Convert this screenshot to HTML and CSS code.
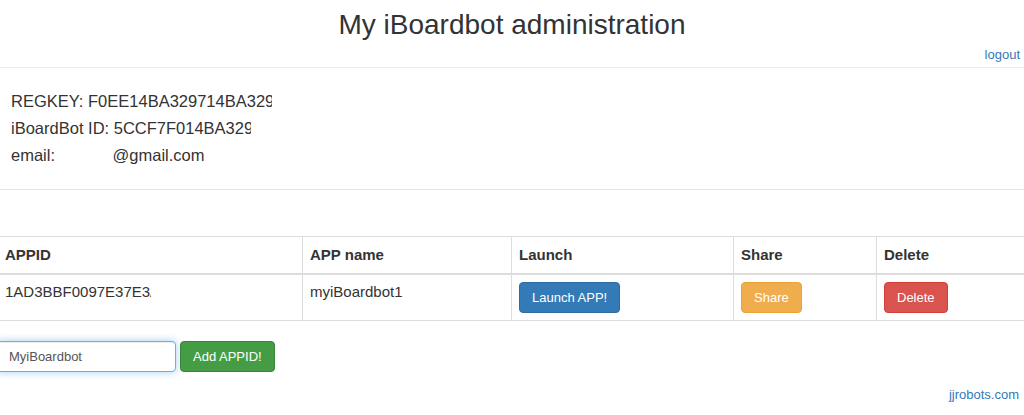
FILE: index.html
```html
<!DOCTYPE html>
<html lang="en">
<head>
    <meta charset="UTF-8">
    <title>My iBoardbot administration</title>
    <link rel="stylesheet" href="styles.css">
</head>
<body>
    <header class="top">
        <h1>My iBoardbot administration</h1>
        <div class="logout"><a href="#">logout</a></div>
    </header>

    <div class="info">
        <div class="info-line">REGKEY: <span class="clip clip-key">F0EE14BA329714BA329C4D</span></div>
        <div class="info-line">iBoardBot ID: <span class="clip clip-id">5CCF7F014BA329A1</span></div>
        <div class="info-line">email: <span class="blank"></span>@gmail.com</div>
    </div>

    <div class="main">
        <table class="apps">
            <thead>
                <tr>
                    <th class="col-id">APPID</th>
                    <th class="col-name">APP name</th>
                    <th class="col-launch">Launch</th>
                    <th class="col-share">Share</th>
                    <th>Delete</th>
                </tr>
            </thead>
            <tbody>
                <tr>
                    <td><span class="clip clip-app">1AD3BBF0097E37E3A</span></td>
                    <td>myiBoardbot1</td>
                    <td><button class="btn btn-blue">Launch APP!</button></td>
                    <td><button class="btn btn-orange">Share</button></td>
                    <td><button class="btn btn-red">Delete</button></td>
                </tr>
            </tbody>
        </table>

        <form class="add-form">
            <input type="text" class="app-input" value="MyiBoardbot">
            <button type="button" class="btn btn-green">Add APPID!</button>
        </form>
    </div>

    <div class="footer"><a href="#">jjrobots.com</a></div>
</body>
</html>
```

FILE: styles.css
```css
* {
    margin: 0;
    padding: 0;
    box-sizing: border-box;
    font-family: 'Liberation Sans', Arial, sans-serif;
}

body {
    background: #fff;
    color: #333;
    overflow: hidden;
}

a {
    color: #337ab7;
    text-decoration: none;
}

.top {
    padding-top: 9px;
    padding-bottom: 3px;
    border-bottom: 1px solid #eee;
}

h1 {
    font-size: 28px;
    font-weight: 400;
    line-height: 31px;
    text-align: center;
}

.logout {
    margin-top: 6px;
    padding-right: 4px;
    text-align: right;
    font-size: 13px;
    line-height: 18px;
}

.info {
    padding: 20px 11px 20px;
    border-bottom: 1px solid #e5e5e5;
    font-size: 16.5px;
    line-height: 27px;
}

.clip {
    display: inline-block;
    overflow: hidden;
    white-space: nowrap;
    vertical-align: top;
}

.clip-key {
    width: 184px;
}

.clip-id {
    width: 137px;
}

.blank {
    display: inline-block;
    width: 53px;
}

.main {
    margin: 46px -4px 0;
}

.apps {
    width: 100%;
    border-collapse: collapse;
    font-size: 15px;
    line-height: 20px;
    table-layout: fixed;
}

.apps th,
.apps td {
    border: 1px solid #ddd;
    text-align: left;
    vertical-align: top;
}

.apps th {
    padding: 8px 7px;
    font-weight: 700;
    border-bottom: 2px solid #ddd;
}

.apps td {
    padding: 7px 7px;
}

.apps th:first-child,
.apps td:first-child {
    padding-left: 8px;
}

.col-id {
    width: 306px;
}

.col-name {
    width: 209px;
}

.col-launch {
    width: 222px;
}

.col-share {
    width: 143px;
}

.clip-app {
    width: 146px;
}

.btn {
    display: inline-block;
    height: 31px;
    padding: 0 12px;
    border: 1px solid transparent;
    border-radius: 4px;
    color: #fff;
    font-size: 13px;
    line-height: 29px;
    cursor: pointer;
    vertical-align: top;
}

.btn-blue {
    background: #337ab7;
    border-color: #2e6da4;
}

.btn-orange {
    background: #f0ad4e;
    border-color: #eea236;
}

.btn-red {
    background: #d9534f;
    border-color: #d43f3a;
}

.btn-green {
    background: #449d44;
    border-color: #398439;
    margin-left: 4px;
}

.add-form {
    display: flex;
    align-items: flex-start;
    margin-top: 20px;
}

.app-input {
    width: 180px;
    height: 31px;
    padding: 6px 12px;
    border: 1px solid #66afe9;
    border-radius: 4px;
    font-size: 13px;
    color: #555;
    outline: 0;
    box-shadow: inset 0 1px 1px rgba(0,0,0,.075), 0 0 8px rgba(102,175,233,.6);
}

.footer {
    margin-top: 14px;
    padding-right: 5px;
    text-align: right;
    font-size: 13px;
    line-height: 18px;
}
```
